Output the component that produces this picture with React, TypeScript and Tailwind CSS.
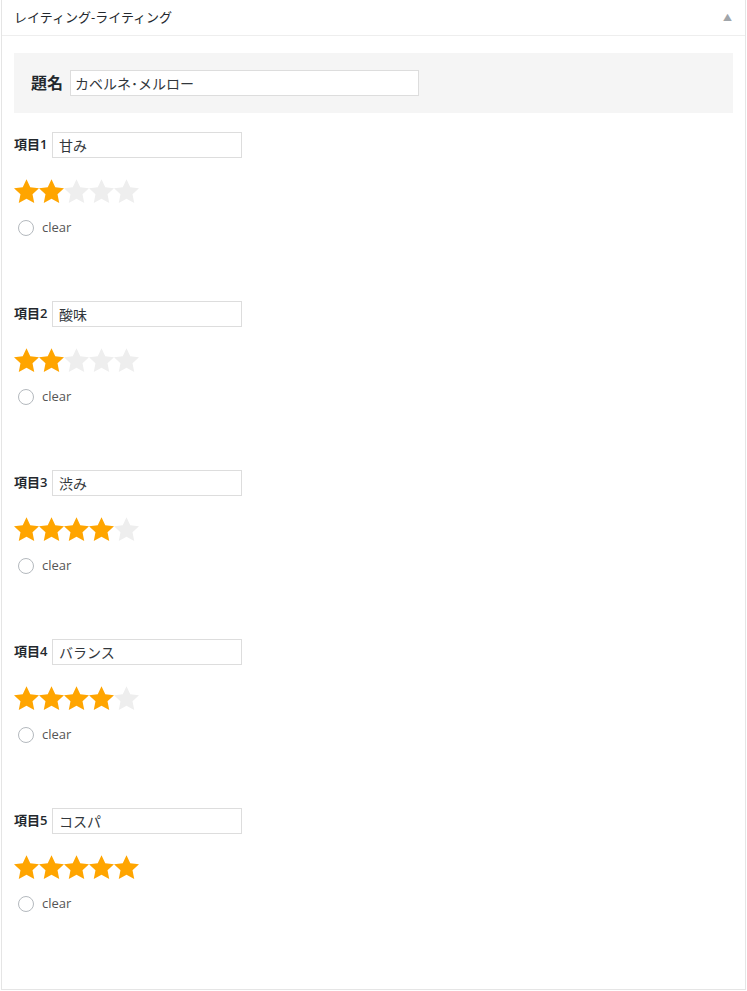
import React from "react";

const ITEMS = [
  { label: "項目1", value: "甘み", rating: 2 },
  { label: "項目2", value: "酸味", rating: 2 },
  { label: "項目3", value: "渋み", rating: 4 },
  { label: "項目4", value: "バランス", rating: 4 },
  { label: "項目5", value: "コスパ", rating: 5 },
];

const jp = { fontFamily: '"Open Sans", "Noto Sans CJK JP", sans-serif' };

function Star({ on }: { on: boolean }) {
  return (
    <svg width="25" height="25" viewBox="1 1 22 22" className="block shrink-0">
      <path
        d="M12 1.2l3.3 7.1 7.7.9-5.7 5.3 1.5 7.7L12 18.3l-6.8 3.9 1.5-7.7L1 9.2l7.7-.9z"
        fill={on ? "#ffa500" : "#eeeeee"}
      />
    </svg>
  );
}

function RatingItem({ label, value, rating }: { label: string; value: string; rating: number }) {
  return (
    <div className="h-[169px] pt-[19px]">
      <div className="flex items-center gap-[4px]">
        <span className="w-[34px] text-[13px] font-semibold text-[#23282d]">{label}</span>
        <div className="flex h-[26px] w-[190px] items-center border border-[#ddd] bg-white px-[6px] text-[14px] text-[#32373c]">
          {value}
        </div>
      </div>
      <div className="mt-[21px] flex">
        {[1, 2, 3, 4, 5].map((n) => (
          <Star key={n} on={n <= rating} />
        ))}
      </div>
      <label className="mt-[14px] flex items-center gap-[8px] pl-[4px]">
        <span className="block h-[16px] w-[16px] rounded-full border border-[#b4b9be] bg-white" />
        <span className="text-[13px] text-[#555]">clear</span>
      </label>
    </div>
  );
}

export default function App() {
  return (
    <div className="bg-white" style={jp}>
      <div className="ml-px h-[990px] w-[745px] border border-t-0 border-[#e5e5e5] bg-white">
        {/* header */}
        <div className="flex h-[36px] items-center justify-between border-b border-[#eee] pl-3 pr-[13px]">
          <h2 className="text-[13px] text-[#23282d]">レイティング-ライティング</h2>
          <span className="text-[9px] text-[#a0a5aa]">▲</span>
        </div>

        <div className="px-3 pt-[17px]">
          {/* title box */}
          <div className="flex h-[60px] items-center gap-[7px] bg-[#f5f5f5] pl-[17px]">
            <span className="text-[16px] font-bold text-[#23282d]">題名</span>
            <div className="flex h-[26px] w-[349px] items-center border border-[#ddd] bg-white px-[4px] text-[14px] text-[#32373c]">
              カベルネ･メルロー
            </div>
          </div>

          {ITEMS.map((item) => (
            <RatingItem key={item.label} {...item} />
          ))}
        </div>
      </div>
    </div>
  );
}
